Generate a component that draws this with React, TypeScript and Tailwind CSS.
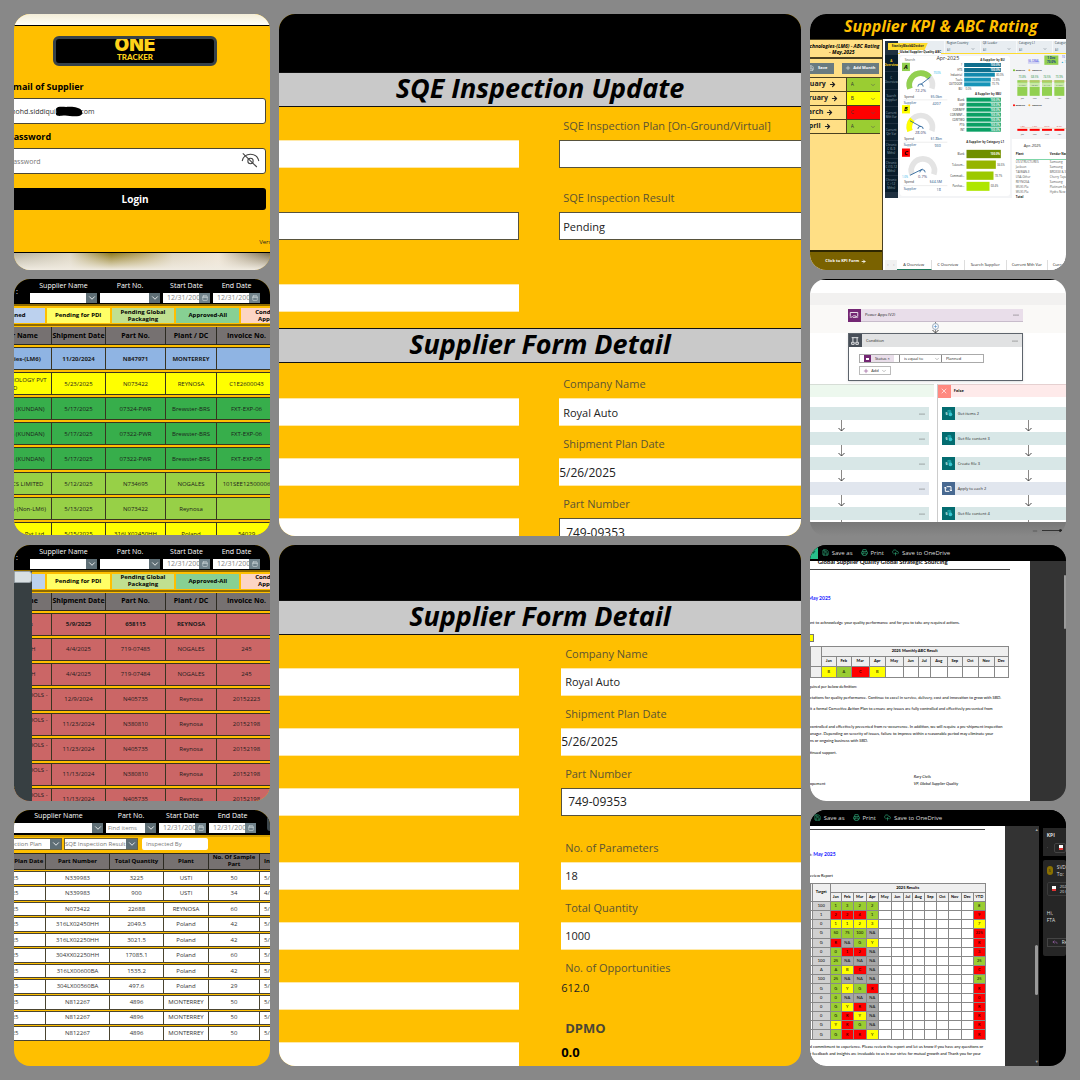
import { useId, type ReactNode } from "react";
import { ArrowRight, Calendar, ChevronDown, CloudUpload, Minus, Paperclip, Plus, Printer, Reply, Save, X } from "lucide-react";

const CARD =
  "relative aspect-square min-h-0 min-w-0 overflow-hidden rounded-2xl font-['Open_Sans','Noto_Sans',sans-serif]";

/* ---------------------------------------------------------------- Login */

function LoginCard() {
  return (
    <section className={`${CARD} flex flex-col bg-[#ffbf00]`}>
      <div className="h-3 shrink-0 border-b border-black bg-linear-to-b from-[#f3edd8] to-[#fffef8]" />
      <div className="flex flex-1 flex-col">
        <div className="mt-2.5 ml-[39px] flex h-[30px] w-[164px] flex-col items-center overflow-hidden rounded-md border-[3px] border-[#37424a] bg-black text-[#ffd21a]">
          <span className="-mt-px font-['Inter',sans-serif] text-[19px] leading-[14px] font-black">ONE</span>
          <span className="mt-px font-['Lato',sans-serif] text-[8px] leading-2 font-black">TRACKER</span>
        </div>
        <form className="mt-[15px] mr-1 -ml-2.5 flex flex-col" onSubmit={(e) => e.preventDefault()}>
          <label htmlFor="login-email" className="pl-1 text-[9px] leading-3 font-bold text-black">
            Email of Supplier
          </label>
          <div className="relative mt-[5px]">
            <input
              id="login-email"
              type="text"
              defaultValue="mohd.siddiqui@          com"
              className="block h-[26px] w-full rounded-[3px] border border-[#4a4636] bg-white pl-1 text-[7px] text-[#333]"
            />
            <svg viewBox="0 0 84 32" className="absolute top-2 left-[51px] h-[11px] w-7" aria-hidden="true">
              <path d="M3 8 C8 -1 24 3 40 2 C56 1 74 4 80 13 C86 24 78 30 66 30 C48 32 36 25 20 29 C6 31 0 26 4 20 Z" fill="#000" />
            </svg>
          </div>
          <label htmlFor="login-password" className="mt-[7px] pl-1 text-[9px] leading-3 font-bold text-black">
            Password
          </label>
          <div className="relative mt-[5px]">
            <input
              id="login-password"
              type="password"
              placeholder="Password"
              className="block h-[26px] w-full rounded-[3px] border border-[#4a4636] bg-white pl-1 text-[7px] placeholder:text-[#777]"
            />
            <svg viewBox="0 0 56 48" className="absolute top-1 right-1.5 h-4 w-[19px]" fill="none" stroke="#444" strokeWidth="3.2" aria-hidden="true">
              <path d="M3 27 C6 15 15 7 28 7 C41 7 50 15 53 27" />
              <circle cx="28" cy="27" r="8" />
              <path d="M5 4 L47 45" />
            </svg>
          </div>
          <button type="submit" className="mt-3.5 h-[22px] rounded-[3px] bg-black text-[10px] leading-none font-bold text-white">
            Login
          </button>
        </form>
        <p className="mt-auto -mr-2.5 mb-1.5 self-end text-[6px] leading-2 text-[#222]">Version</p>
      </div>
      <div className="h-[18px] shrink-0 border-t border-black bg-[linear-gradient(to_right,#b5b09e,#ddd6c4_22%,#8f7a1c_38%,#b5a262_50%,#ddd3bd_62%,#efe4d4_80%,#7d6f50)]">
        <div className="h-full bg-linear-to-b from-transparent to-[#f0ebe1]" />
      </div>
    </section>
  );
}

/* --------------------------------------------------------- Filter strip */

function FilterSelect({ label, placeholder, className }: { label: string; placeholder?: string; className: string }) {
  const id = useId();
  return (
    <div className={`flex shrink-0 flex-col items-center ${className}`}>
      <label htmlFor={id} className="text-[7px] leading-[10px] whitespace-nowrap text-white">
        {label}
      </label>
      <div className="relative mt-0.5 h-2.5 w-full">
        <select id={id} className="block h-full w-full appearance-none bg-white pl-0.5 text-[6px] leading-[10px] text-[#888]">
          <option>{placeholder ?? ""}</option>
        </select>
        <span className="pointer-events-none absolute inset-y-0 right-0 flex w-[11px] items-center justify-center bg-[#5f6f76] text-white">
          <ChevronDown className="size-2.5" />
        </span>
      </div>
    </div>
  );
}

function FilterDate({ label, value }: { label: string; value: string }) {
  const id = useId();
  return (
    <div className="flex w-[47px] shrink-0 flex-col items-center">
      <label htmlFor={id} className="text-[7px] leading-[10px] whitespace-nowrap text-white">
        {label}
      </label>
      <div className="mt-0.5 flex h-2.5 w-full">
        <input
          id={id}
          type="text"
          defaultValue={value}
          className="block min-w-0 flex-1 bg-white pl-1 text-[7px] leading-[10px] text-[#888]"
        />
        <span className="flex w-[11px] items-center justify-center bg-[#71838b] text-[#dfe6e9]">
          <Calendar className="size-1.5" />
        </span>
      </div>
    </div>
  );
}

/* ------------------------------------------------------- Shipment cards */

type Shipment = { tone: string; bold?: boolean; cells: ReactNode[] };

const TABS = [
  { label: "Planned", tone: "bg-[#bcd1ee]" },
  { label: "Pending for PDI", tone: "bg-[#ffff66]" },
  { label: "Pending Global Packaging", tone: "bg-[#c0e090]" },
  { label: "Approved-All", tone: "bg-[#87d093]" },
  { label: "Conditional Approved", tone: "bg-[#fcd5c4]" },
];

const BLUE = "bg-[#8fb4e3]";
const YELLOW = "bg-[#ffff00]";
const GREEN = "bg-[#37ae4b]";
const LIME = "bg-[#97d047]";
const RED = "bg-[#cb6666]";

const STATUS_ROWS: Shipment[] = [
  { tone: BLUE, bold: true, cells: ["Technologies-(LM6)", "11/20/2024", "N847971", "MONTERREY", ""] },
  { tone: YELLOW, cells: ["MERA TECHNOLOGY PVT LTD", "5/23/2025", "N073422", "REYNOSA", "C1E2600043"] },
  { tone: GREEN, cells: ["SK FORGING (KUNDAN)", "5/17/2025", "07324-PWR", "Brewster-BRS", "FXT-EXP-06"] },
  { tone: GREEN, cells: ["SK FORGING (KUNDAN)", "5/17/2025", "07322-PWR", "Brewster-BRS", "FXT-EXP-06"] },
  { tone: GREEN, cells: ["SK FORGING (KUNDAN)", "5/17/2025", "07322-PWR", "Brewster-BRS", "FXT-EXP-05"] },
  { tone: LIME, cells: ["ELECTRONICS LIMITED", "5/12/2025", "N734695", "NOGALES", "101SEE12500006"] },
  { tone: LIME, cells: ["Technologies-(Non-LM6)", "5/13/2025", "N073422", "Reynosa", ""] },
  { tone: YELLOW, cells: ["Precision Alloys Pvt Ltd", "5/15/2025", "316LX02450HH", "Poland", "54029"] },
];

const TOOLS = (
  <>
    STANLEY POWER TOOLS -
    <br />
    IND
  </>
);

const REJECTED_ROWS: Shipment[] = [
  { tone: RED, bold: true, cells: ["Luxor Plastics", "5/9/2025", "658115", "REYNOSA", ""] },
  { tone: RED, cells: ["PRECISION TECH", "4/4/2025", "719-07485", "NOGALES", "245"] },
  { tone: RED, cells: ["PRECISION TECH", "4/4/2025", "719-07484", "NOGALES", "245"] },
  { tone: RED, cells: [TOOLS, "12/9/2024", "N405735", "Reynosa", "20152223"] },
  { tone: RED, cells: [TOOLS, "11/23/2024", "N380810", "Reynosa", "20152198"] },
  { tone: RED, cells: [TOOLS, "11/23/2024", "N405735", "Reynosa", "20152198"] },
  { tone: RED, cells: [TOOLS, "11/13/2024", "N380810", "Reynosa", "20152198"] },
  { tone: RED, cells: [TOOLS, "11/13/2024", "N405735", "Reynosa", "20152198"] },
];

function ShipmentCard({ rows, drawer }: { rows: Shipment[]; drawer?: boolean }) {
  return (
    <section className={`${CARD} bg-[#ffbf00]`}>
      <div className="flex h-[25px] gap-[3px] bg-black pt-0.5">
        <span className="w-[13px] pt-1.5 pl-0.5 text-[7px] leading-[10px] text-white">:</span>
        <FilterSelect label="Supplier Name" className="w-[67px]" />
        <FilterSelect label="Part No." className="w-[60px]" />
        <FilterDate label="Start Date" value="12/31/2001" />
        <FilterDate label="End Date" value="12/31/2001" />
      </div>
      <div className="-ml-8 flex h-[22px] w-[322px] gap-0.5 border-y-2 border-[#8f6b00] pt-0.5 pb-px">
        {TABS.map((tab) => (
          <button
            key={tab.label}
            type="button"
            className={`w-[63px] px-1 text-center text-[6px] leading-[7px] font-bold text-black ${tab.tone}`}
          >
            {tab.label}
          </button>
        ))}
      </div>
      <table className="-mt-px -ml-[41px] w-[304px] table-fixed border-separate border-spacing-x-0 border-spacing-y-0.5">
        <colgroup>
          <col className="w-[79px]" />
          <col className="w-[54px]" />
          <col className="w-[60px]" />
          <col className="w-[51px]" />
          <col />
        </colgroup>
        <thead>
          <tr className="h-[18px] bg-[#767171] text-[7px] leading-2 font-bold text-black">
            {["Supplier Name", "Shipment Date", "Part No.", "Plant / DC", "Invoice No."].map((h) => (
              <th key={h} className="border-r border-b border-[#2c2a22] p-0 whitespace-nowrap">
                {h}
              </th>
            ))}
          </tr>
        </thead>
        <tbody>
          {rows.map((row, i) => (
            <tr key={i} className={`h-[23px] text-center text-[6px] leading-[8px] text-[#1c1c1c] ${row.tone} ${row.bold ? "font-bold" : ""}`}>
              {row.cells.map((cell, j) => (
                <td key={j} className="overflow-hidden border-y border-r border-[#3a3420] px-0.5 py-0">
                  {cell}
                </td>
              ))}
            </tr>
          ))}
        </tbody>
      </table>
      {drawer && (
        <div className="absolute top-[26px] bottom-0 left-0 w-[18px] bg-[#373f42]">
          <div className="h-3 rounded-r-[3px] border border-[#9aa3a8] bg-[#d8dfe2]" />
        </div>
      )}
    </section>
  );
}

/* ------------------------------------------------------ Inspection list */

const PARTS = [
  ["5/26/2025", "N339983", "3225", "USTI", "50", "5/26"],
  ["5/26/2025", "N339983", "900", "USTI", "34", "4/26"],
  ["5/26/2025", "N073422", "22688", "REYNOSA", "60", "5/26"],
  ["5/26/2025", "316LX02450HH", "2049.5", "Poland", "42", "5/26"],
  ["5/26/2025", "316LX02250HH", "3021.5", "Poland", "42", "5/26"],
  ["5/26/2025", "304XX02250HH", "17085.1", "Poland", "60", "5/26"],
  ["5/26/2025", "316LX00600BA", "1535.2", "Poland", "42", "5/26"],
  ["5/26/2025", "304LX00560BA", "497.6", "Poland", "29", "5/26"],
  ["5/26/2025", "N812267", "4896", "MONTERREY", "50", "5/26"],
  ["5/26/2025", "N812267", "4896", "MONTERREY", "50", "5/26"],
  ["5/26/2025", "N812267", "4896", "MONTERREY", "50", "5/26"],
];

function InspectionSelect({ label, className }: { label: string; className: string }) {
  return (
    <div className={`relative h-3 shrink-0 border border-[#6b6240] ${className}`}>
      <select aria-label={label} className="block h-full w-full appearance-none bg-white text-[6px] leading-[10px] text-[#777]">
        <option>{label}</option>
      </select>
      <span className="pointer-events-none absolute inset-y-0 right-0 flex w-[11px] items-center justify-center bg-[#5f6f76] text-white">
        <ChevronDown className="size-2.5" />
      </span>
    </div>
  );
}

function InspectionCard() {
  return (
    <section className={`${CARD} bg-[#ffbf00]`}>
      <div className="flex h-[25px] gap-[3px] bg-black pt-px">
        <FilterSelect label="Supplier Name" className="w-[89px]" />
        <FilterSelect label="Part No." placeholder="Find items" className="w-[50px]" />
        <FilterDate label="Start Date" value="12/31/2001" />
        <FilterDate label="End Date" value="12/31/2001" />
        <button type="button" aria-label="Clear filters" className="mt-1 ml-2 h-4 w-3 shrink-0 rounded-[3px] bg-[#3d474c]" />
      </div>
      <div className="flex h-[17px] items-center gap-0.5 border-t-2 border-[#d49f00]">
        <InspectionSelect label="Inspection Plan" className="-ml-4 w-16" />
        <InspectionSelect label="SQE Inspection Result" className="w-[74px]" />
        <input
          aria-label="Inspected By"
          placeholder="Inspected By"
          className="ml-0.5 h-3 w-[66px] rounded-[2px] bg-white pl-1 text-[6px] placeholder:text-[#777]"
        />
      </div>
      <table className="-ml-8 h-[190px] w-[311px] table-fixed border-separate border-spacing-x-0 border-spacing-y-px">
        <colgroup>
          <col className="w-16" />
          <col className="w-16" />
          <col className="w-[54px]" />
          <col className="w-[45px]" />
          <col className="w-[51px]" />
          <col />
        </colgroup>
        <thead>
          <tr className="h-[17px] bg-[#767171] text-[6px] leading-[7px] font-bold text-black">
            {["Shipment Plan Date", "Part Number", "Total Quantity", "Plant", "No. Of Sample Part", "Inspection"].map((h, i) => (
              <th key={h} className={`border-y border-r border-[#2c2a22] p-0 ${i === 5 ? "pl-1 text-left" : ""}`}>
                {h}
              </th>
            ))}
          </tr>
        </thead>
        <tbody>
          {PARTS.map((row, i) => (
            <tr key={i} className="bg-white text-center text-[6px] leading-[7px] text-[#333]">
              {row.map((cell, j) => (
                <td
                  key={j}
                  className={`border-y border-r border-[#4a4430] py-0 ${j === 0 ? "pl-2 text-left" : j === 5 ? "pl-1 text-left" : ""}`}
                >
                  {cell}
                </td>
              ))}
            </tr>
          ))}
        </tbody>
      </table>
    </section>
  );
}

/* ---------------------------------------------------------- Form panels */

function Band({ children }: { children: ReactNode }) {
  return (
    <h2 className="h-[35px] shrink-0 border-y border-[#111] bg-[#c9c9c9] text-center text-[27px] leading-[30px] font-bold text-black italic">
      {children}
    </h2>
  );
}

function Field({ label, value, boxed, inner }: { label: string; value?: string; boxed?: boolean; inner?: string }) {
  const id = useId();
  return (
    <div className="flex flex-col">
      <label htmlFor={id} className="pl-1 text-[11px] leading-4 whitespace-nowrap text-[#5c5433]">
        {label}
      </label>
      <input
        id={id}
        type="text"
        defaultValue={value}
        className={`mt-1.5 -mr-1 block h-7 bg-white text-[#222] ${inner ?? "pl-1 text-[11px]"} ${
          boxed ? "border border-[#57523c]" : "border-y border-[#ffe9a8]"
        }`}
      />
    </div>
  );
}

function BlankField({ label, boxed }: { label: string; boxed?: boolean }) {
  return (
    <input
      type="text"
      aria-label={label}
      className={`-ml-1 block h-7 bg-white ${boxed ? "border border-[#57523c]" : "border-y border-[#ffe9a8]"}`}
    />
  );
}

function InspectionUpdateCard() {
  return (
    <section className={`${CARD} flex flex-col bg-[#ffbf00]`}>
      <div className="h-[58px] shrink-0 bg-black" />
      <Band>SQE Inspection Update</Band>
      <div className="flex gap-10 pb-4">
        <div className="flex w-[46%] flex-col gap-11 pt-[33px]">
          <BlankField label="Inspection date" />
          <BlankField label="Inspected by" boxed />
          <BlankField label="Remarks" />
        </div>
        <div className="flex flex-1 flex-col gap-[22px] pt-[11px]">
          <Field label="SQE Inspection Plan [On-Ground/Virtual]" boxed />
          <Field label="SQE Inspection Result" value="Pending" boxed inner="pl-[3px] text-[11px]" />
        </div>
      </div>
      <Band>Supplier Form Detail</Band>
      <div className="flex gap-10">
        <div className="flex w-[46%] flex-col gap-8 pt-[35px]">
          <BlankField label="Supplier code" />
          <BlankField label="Invoice number" />
          <BlankField label="Plant" />
        </div>
        <div className="flex flex-1 flex-col gap-2.5 pt-[13px]">
          <Field label="Company Name" value="Royal Auto" />
          <Field label="Shipment Plan Date" value="5/26/2025" inner="pl-0 text-[12px]" />
          <Field label="Part Number" value="749-09353" boxed inner="pl-1.5 text-[12px]" />
        </div>
      </div>
    </section>
  );
}

function SupplierFormCard() {
  return (
    <section className={`${CARD} flex flex-col bg-[#ffbf00]`}>
      <div className="h-[55px] shrink-0 bg-black" />
      <Band>Supplier Form Detail</Band>
      <div className="flex gap-10">
        <div className="flex w-[46%] flex-col gap-8 pt-[33px]">
          <BlankField label="Supplier code" />
          <BlankField label="Invoice number" />
          <BlankField label="Plant" />
          <div className="mt-3.5 flex flex-col gap-8">
            <BlankField label="Defects" />
            <BlankField label="Sample size" />
            <BlankField label="Rejections" />
            <BlankField label="Sigma level" />
          </div>
        </div>
        <div className="flex flex-1 flex-col gap-2.5 pt-[11px] pl-0.5">
          <Field label="Company Name" value="Royal Auto" />
          <Field label="Shipment Plan Date" value="5/26/2025" inner="pl-0 text-[12px]" />
          <Field label="Part Number" value="749-09353" boxed inner="pl-1.5 text-[12px]" />
          <div className="mt-3.5 flex flex-col gap-2.5">
            <Field label="No. of Parameters" value="18" />
            <Field label="Total Quantity" value="1000" />
          </div>
          <dl className="text-[11px] leading-4">
            <dt className="pl-1 text-[#5c5433]">No. of Opportunities</dt>
            <dd className="mt-1 text-[#222]">612.0</dd>
            <dt className="mt-6 pl-1 text-[13px] font-bold text-[#4a4636]">DPMO</dt>
            <dd className="mt-2 text-[13px] font-bold text-black">0.0</dd>
          </dl>
        </div>
      </div>
    </section>
  );
}

/* ------------------------------------------------------------ KPI card */

const MONTHS = [
  { name: "January", grade: "A", tone: "bg-[#9acd32]" },
  { name: "February", grade: "B", tone: "bg-[#ffff00]" },
  { name: "March", grade: "C", tone: "bg-[#ff0000]" },
  { name: "April", grade: "A", tone: "bg-[#9acd32]" },
];

const NAV = [
  "A Overview",
  "C Overview",
  "Search Supplier",
  "Current Mth Var",
  "Current Qtr Var",
  "Chronic C (6-9 Mths)",
  "Chronic C (10-12 Mths)",
  "Chronic C >12 Mths)",
];

const GAUGES = [
  { grade: "A", top: 157, badge: "#92d050", arc: "#92d050", share: 72, pct: "72.2%", spend: "$5.0bn", count: "4207", needle: "M344 223 L374 200", target: "70.0%", tx: 394, ty: 191 },
  { grade: "B", top: 285, badge: "#ffff00", arc: "#ffff00", share: 28, pct: "28.0%", spend: "$1.8bn", count: "930", needle: "M345 350 L312 332", target: "", tx: 0, ty: 0 },
  { grade: "C", top: 416, badge: "#ff0000", arc: "#e4e4e4", share: 1, pct: "0.7%", spend: "$44.5M", count: "18", needle: "M350 478 L312 497", target: "1.0%", tx: 297, ty: 506 },
];

function GaugeColumn() {
  return (
    <svg viewBox="282 138 148 420" className="h-[140px] w-[49px] shrink-0" role="img" aria-label="Rating gauges">
      <text x="312" y="151" fontSize="10" textAnchor="middle" fill="#555">Search</text>
      {GAUGES.map((g) => {
        const cx = 345 + (g.grade === "C" ? 6 : 0);
        const cy = g.top + 66;
        return (
          <g key={g.grade}>
            <path d={`M${cx - 33} ${cy + 12} A35 35 0 1 1 ${cx + 33} ${cy + 12}`} fill="none" stroke="#e4e4e4" strokeWidth="17" />
            <path
              d={`M${cx - 33} ${cy + 12} A35 35 0 1 1 ${cx + 33} ${cy + 12}`}
              fill="none"
              stroke={g.arc}
              strokeWidth="17"
              pathLength={100}
              strokeDasharray={`${g.share} 200`}
            />
            <path d={g.needle} stroke="#1c5a94" strokeWidth="2.5" />
            <path d={`M${cx - 9} ${cy + 6} a8 8 0 1 1 16 0`} fill="none" stroke="#1c5a94" strokeWidth="2.5" />
            <rect x="288" y={g.top} width="24" height="25" fill={g.badge} />
            <text x="300" y={g.top + 19} fontSize="18" fontWeight="700" fontStyle="italic" textAnchor="middle">{g.grade}</text>
            <text x={cx - 1} y={g.top + 88} fontSize="12" textAnchor="middle" fill="#3b3b6b">{g.pct}</text>
            {g.target && <text x={g.tx} y={g.ty} fontSize="8" textAnchor="middle" fill="#18b0e8">{g.target}</text>}
            <text x="295" y={g.top + 105} fontSize="10" fill="#333">Spend</text>
            <text x="409" y={g.top + 105} fontSize="11" textAnchor="end" fill="#1c4f86">{g.spend}</text>
            <path d={`M293 ${g.top + 112} H425`} stroke="#ddd" strokeWidth="1.5" />
            <text x="293" y={g.top + 124} fontSize="10" fill="#1c4f86">Supplier</text>
            <text x="405" y={g.top + 127} fontSize="11" textAnchor="end" fill="#1c4f86">{g.count}</text>
          </g>
        );
      })}
    </svg>
  );
}

type Bar = { y: number; h: number; end: number; name: string; value: string; fill: string };

const BU: Bar[] = [
  { y: 165, h: 12, end: 585, name: "?", value: "100.0%", fill: "#0f6f8e" },
  { y: 180, h: 12, end: 585, name: "HTS", value: "100.0%", fill: "#0f6f8e" },
  { y: 194, h: 12, end: 567, name: "Industrial", value: "80.0%", fill: "#1289ad" },
  { y: 209, h: 12, end: 555, name: "Tools", value: "72.8%", fill: "#1594b8" },
  { y: 223, h: 12, end: 554, name: "OUTDOOR", value: "70.7%", fill: "#1594b8" },
  { y: 238, h: 12, end: 475, name: "BU", value: "0.0%", fill: "#1594b8" },
];

const SBU: Bar[] = ["Blank", "GBP", "COR/MFP", "COR/MNP...", "COR/TWO", "PTG", "INT"].map((name, i) => ({
  y: 269 + i * 15,
  h: 12,
  end: 585,
  name,
  value: "100.0%",
  fill: "#0aa064",
}));

const CATEGORY: Bar[] = [
  { y: 432, h: 25, end: 585, name: "Blank", value: "100.0%", fill: "#6f8f00" },
  { y: 464, h: 25, end: 570, name: "Telecom...", value: "84.6%", fill: "#96b400" },
  { y: 497, h: 25, end: 563, name: "Commodi...", value: "78.7%", fill: "#9cc900" },
  { y: 529, h: 27, end: 551, name: "Purchas...", value: "68.4%", fill: "#aee600" },
];

function Bars({ bars, start }: { bars: Bar[]; start: number }) {
  return (
    <g>
      {bars.map((b) => {
        const full = b.end === 585;
        return (
          <g key={b.name} fontSize="8">
            <rect x={start} y={b.y - b.h / 2} width={b.end - start} height={b.h} fill={b.fill} />
            <text x={start - 6} y={b.y + 3} textAnchor="end" fill="#222">{b.name}</text>
            <text x={full ? 582 : b.end + 4} y={b.y + 3} textAnchor={full ? "end" : "start"} fill={full ? "#fff" : "#444"} fontWeight={full ? 700 : 400}>
              {b.value}
            </text>
          </g>
        );
      })}
    </g>
  );
}

function SupplierBars() {
  return (
    <svg viewBox="430 138 182 420" className="h-[140px] w-[61px] shrink-0 overflow-visible" role="img" aria-label="A suppliers by unit">
      <text x="426" y="151" fontSize="16" textAnchor="middle" fill="#333">Apr-2025</text>
      <g fontSize="9" fontWeight="700" textAnchor="middle" fill="#333">
        <text x="560" y="152">A Supplier by BU</text>
        <text x="547" y="254">A Supplier by SBU</text>
        <text x="538" y="400">A Supplier by Category L1</text>
      </g>
      <Bars bars={BU} start={475} />
      <Bars bars={SBU} start={482} />
      <Bars bars={CATEGORY} start={482} />
    </svg>
  );
}

function TrendCharts() {
  return (
    <svg viewBox="615 133 165 248" className="h-[83px] w-[55px] shrink-0" role="img" aria-label="Monthly trend">
      <text x="680" y="156" fontSize="9" textAnchor="middle" fill="#2a35e0" textDecoration="underline">GLOBAL</text>
      <rect x="712" y="137" width="42" height="28" fill="#92d050" />
      <text x="733" y="148" fontSize="9" fontWeight="700" textAnchor="middle" fill="#173a8a">1 Dec</text>
      <text x="733" y="160" fontSize="9" fontWeight="700" textAnchor="middle" fill="#173a8a">70.0%</text>
      <text x="764" y="146" fontSize="8" fill="#2a35e0">10</text>
      <text x="762" y="159" fontSize="8" fill="#12a5c9">▲ 1</text>
      <circle cx="621" cy="181" r="3" fill="#6ec02c" />
      <text x="626" y="184" fontSize="5" fontWeight="700">GREEN 64%</text>
      <circle cx="667" cy="181" r="3" fill="#f5b041" />
      <text x="676" y="184" fontSize="5" fontWeight="700">GREEN 64%</text>
      {["Jan", "Feb", "Mar", "Apr", ""].map((m, i) => {
        const x = 631 + i * 37;
        return (
          <g key={i} fontSize="8" textAnchor="middle">
            <text x={x + 15} y="205" fill="#238a3a">{["73.8%", "68.5%", "74.5%", "73.9%", ""][i]}</text>
            <rect x={x} y="211" width="30" height="8" fill="#92d050" />
            <rect x={x} y="219" width="30" height="11" fill="#c9e9a6" />
            <rect x={x} y="231" width="30" height="27" fill="#92d050" />
            <text x={x + 15} y="228" fontSize="7" fill="#567">{["74.0%", "73.0%", "74.1%", "74.8%", ""][i]}</text>
            <text x={x + 15} y="269" fontSize="7" fill="#444">{m}</text>
            <text x={x + 15} y="351" fontSize="7" fill="#e03030">{["1.0%", "1.6%", "0.7%", "0.7%", ""][i]}</text>
            <rect x={x} y="357" width="30" height="6" fill="#ff0000" />
            <text x={x + 15} y="375" fontSize="7" fill="#444">{m}</text>
          </g>
        );
      })}
      <path d="M640 214 L780 214 M640 353 L780 356" stroke="#f8b98a" strokeWidth="1.5" fill="none" />
      <circle cx="621" cy="286" r="3" fill="#ff0000" />
      <text x="626" y="289" fontSize="5" fontWeight="700">GREEN 67%</text>
      <circle cx="667" cy="286" r="3" fill="#f5b041" />
      <text x="676" y="289" fontSize="5" fontWeight="700">GREEN 67%</text>
    </svg>
  );
}

const VENDORS = [
  ["US STRUCTURES", "Samsung"],
  ["Jackson", "Samsung"],
  ["TAIWAN-E", "BROSSE & SON"],
  ["USA-Other", "Cherry Tape Ind"],
  ["REYNOSA", "Samsung"],
  ["WUXI-Pla", "Platinum Equity"],
  ["WUXI-Pla", "Hydro New"],
];

function KpiCard() {
  return (
    <section className={`${CARD} flex flex-col bg-white`}>
      <h2 className="h-[25px] shrink-0 bg-black pl-1.5 text-center text-[16px] leading-6 font-bold text-[#ffbf00] italic">
        Supplier KPI &amp; ABC Rating
      </h2>
      <div className="flex min-h-0 flex-1">
        <div className="flex w-[73px] shrink-0 flex-col border-r border-[#4a4020] bg-[#ffdf85]">
          <h3 className="flex h-5 items-center justify-center border-t border-b-2 border-[#4a4020] pr-2 text-center text-[5px] leading-[6px] font-bold text-black italic">
            <span className="-mx-4 whitespace-nowrap">
              Technologies-(LM6) - ABC Rating
              <br />- May,2025
            </span>
          </h3>
          <div className="flex h-[19px] items-center gap-2 border-b border-[#4a4020] pr-[3px]">
            <button type="button" className="-ml-2 flex h-[11px] w-8 items-center justify-center gap-1 bg-[#6a7b80] text-[4px] font-bold text-white">
              <Save className="size-1.5" /> Save
            </button>
            <button type="button" className="flex h-[11px] flex-1 items-center justify-center gap-0.5 bg-[#6a7b80] text-[4px] font-bold whitespace-nowrap text-white">
              <Plus className="size-1.5" /> Add Month
            </button>
          </div>
          <div className="mr-0.5">
            {MONTHS.map((m) => (
              <div key={m.name} className="flex h-3.5 border-b border-[#4a4020]">
                <div className="-ml-[21px] flex w-[58px] shrink-0 items-center justify-center gap-[3px] border-r border-[#4a4020] text-[7px] font-bold text-[#222]">
                  <span>{m.name}</span>
                  <ArrowRight className="size-[7px]" strokeWidth={4} />
                </div>
                <div className={`relative flex-1 ${m.tone}`}>
                  <select aria-label={`${m.name} rating`} className="block h-full w-full appearance-none pl-1 text-[5px] text-[#333]">
                    <option>{m.grade}</option>
                  </select>
                  <ChevronDown className="pointer-events-none absolute top-1 right-1 size-1.5 text-[#555]" />
                </div>
              </div>
            ))}
          </div>
          <button type="button" className="mt-auto flex h-5 items-center justify-center gap-0.5 border-t-2 border-[#2f2700] bg-[#7a6200] text-[4px] font-bold text-white">
            Click to KPI Form <ArrowRight className="size-[5px]" strokeWidth={4} />
          </button>
        </div>
        <div className="flex min-w-0 flex-1 flex-col pl-0.5">
          <div className="mt-0.5 flex h-[157px] overflow-hidden bg-[#f3f4f6]">
            <nav className="flex w-[13px] shrink-0 flex-col gap-px bg-[#1f3040] pt-3.5 pb-1.5">
              {NAV.map((item, i) => (
                <a
                  key={item}
                  href="#kpi"
                  className={`flex flex-1 items-center justify-center bg-[#081c2b] text-center text-[3px] leading-[4px] ${i === 0 ? "font-bold text-[#ffd21a]" : "text-[#8fa3b0]"}`}
                >
                  {item}
                </a>
              ))}
            </nav>
            <div className="flex min-w-0 flex-1 flex-col">
              <div className="flex h-3 shrink-0 bg-[#e8edf1] pl-[45px]">
                {["Region Country", "QE Leader", "Category L1", "Category L2"].map((f) => (
                  <label key={f} className="ml-px flex w-[35px] shrink-0 flex-col border-l border-[#f6f8fa] pl-0.5 text-[3px] leading-[4px] text-[#234]">
                    {f}
                    <span className="relative mt-0.5">
                      <select className="block h-1.5 w-full appearance-none text-[3px] text-[#567]">
                        <option>All</option>
                      </select>
                      <ChevronDown className="pointer-events-none absolute top-0 right-1 size-1" />
                    </span>
                  </label>
                ))}
              </div>
              <div className="h-px shrink-0 bg-[#ffdc2e]" />
              <div className="flex min-h-0 flex-1">
                <div className="mt-0.5 mb-0.5 ml-0.5 flex w-[110px] shrink-0 rounded-[3px] bg-white">
                  <GaugeColumn />
                  <SupplierBars />
                </div>
                <div className="ml-0.5 flex min-w-0 flex-1 flex-col">
                  <TrendCharts />
                  <div className="mt-0.5 flex-1 overflow-hidden bg-white px-1 pt-1">
                    <p className="pl-2 text-[4px] leading-[5px] text-[#222]">Apr-2025</p>
                    <table className="mt-1 w-20 table-fixed text-left text-[3px] leading-[5px] text-[#555]">
                      <thead>
                        <tr className="border-b border-[#7fd6a8] font-bold text-[#222]">
                          <th className="w-[34px] p-0 pb-0.5">Plant</th>
                          <th className="p-0 pb-0.5">Vendor Name</th>
                        </tr>
                      </thead>
                      <tbody>
                        {VENDORS.map((v, i) => (
                          <tr key={i}>
                            <td className="p-0 whitespace-nowrap">{v[0]}</td>
                            <td className="p-0 whitespace-nowrap">{v[1]}</td>
                          </tr>
                        ))}
                        <tr className="font-bold text-[#222]">
                          <td className="p-0">Total</td>
                        </tr>
                      </tbody>
                    </table>
                  </div>
                </div>
              </div>
            </div>
          </div>
          <div className="mt-auto flex h-2.5 items-stretch bg-[#f1f1f1] text-[4px] leading-[8px] whitespace-nowrap text-[#222]">
            <span className="flex w-3 shrink-0 items-center justify-around text-[#888]">
              <span>‹</span>
              <span>›</span>
            </span>
            {[
              ["A Overview", "w-[35px] border-b border-b-[#1d7a5c]"],
              ["C Overview", "w-[33px]"],
              ["Search Supplier", "w-[42px]"],
              ["Current Mth Var", "w-[41px]"],
              ["Current Qtr Var", "w-10"],
            ].map(([t, c]) => (
              <button key={t} type="button" className={`shrink-0 border-r border-r-[#ddd] bg-white ${c}`}>
                {t}
              </button>
            ))}
          </div>
        </div>
      </div>
      <span className="absolute top-[29px] left-[78px] h-[7px] w-10 bg-[#ffdc2e] pl-1 text-[3px] leading-[7px] font-bold text-[#222] [clip-path:polygon(0_0,100%_0,92%_100%,0_100%)]">
        StanleyBlack&amp;Decker
      </span>
      <span className="absolute top-9 left-[90px] bg-white text-[3px] leading-[5px] font-bold whitespace-nowrap text-[#222]">
        Global Supplier Quality ABC
      </span>
    </section>
  );
}

/* ----------------------------------------------------------- Flow card */

function StepArrow() {
  return (
    <svg viewBox="0 0 20 36" className="h-3 w-[7px]" aria-hidden="true">
      <path d="M10 0 V33" stroke="#8a8886" strokeWidth="3" />
      <path d="M1 24 L10 33 L19 24" stroke="#444" strokeWidth="3" fill="none" />
    </svg>
  );
}

function Dots() {
  return (
    <svg viewBox="0 0 18 6" className="mr-1 h-0.5 w-1.5 shrink-0" fill="#444" aria-hidden="true">
      <circle cx="3" cy="3" r="1.6" />
      <circle cx="9" cy="3" r="1.6" />
      <circle cx="15" cy="3" r="1.6" />
    </svg>
  );
}

function ShareIcon() {
  return (
    <span className="flex size-[13px] shrink-0 items-center justify-center bg-[#036c70]">
      <svg viewBox="0 0 24 24" className="size-[9px]" aria-hidden="true">
        <circle cx="14" cy="8" r="6" fill="#1a9ba1" />
        <circle cx="17" cy="14" r="5" fill="#37c6d0" />
        <rect x="2" y="7" width="10" height="10" fill="#03787c" />
        <path d="M9 9.5 H6 a1.3 1.3 0 0 0 0 2.6 H8 a1.3 1.3 0 0 1 0 2.6 H5" stroke="#fff" strokeWidth="1.5" fill="none" />
      </svg>
    </span>
  );
}

const STEPS = ["Get items 2", "Get file content 3", "Create file 3", "Apply to each 2", "Get file content 4"];

function FlowCard() {
  return (
    <section className={`${CARD} flex flex-col bg-[#848484]`}>
      <div className="flex h-[243px] shrink-0 flex-col bg-white text-[4px] text-[#222]">
        <div className="h-3.5 shrink-0 border-t border-black" />
        <div className="h-3 shrink-0 bg-[#f2f1f0]" />
        <div className="flex h-7 shrink-0 flex-col items-center bg-[#faf9f7] pt-1 pr-[5px]">
          <div className="flex h-[13px] w-[175px] items-center border-b border-[#c8bccb] bg-[#e9deea]">
            <span className="flex size-[13px] items-center justify-center bg-[#742774]">
              <svg viewBox="0 0 24 24" className="size-2.5" fill="none" stroke="#fff" strokeWidth="2" aria-hidden="true">
                <path d="M3 15 V6 H21 V15 M2 17 H8 M16 17 H22" />
                <path d="M12 13 l3 3 -3 3 -3 -3 z M15 13 l3 3 -3 3" />
              </svg>
            </span>
            <span className="ml-1 flex-1">Power Apps (V2)</span>
            <Dots />
          </div>
          <div className="relative flex h-3 flex-col items-center">
            <StepArrow />
            <Plus className="absolute top-px size-[7px] rounded-full border border-[#9ab] bg-white text-[#1467b3]" />
          </div>
        </div>
        <div className="flex shrink-0 justify-center pr-[5px]">
          <div className="h-12 w-[175px] border border-[#5d646c] shadow-sm">
            <div className="flex h-[13px] items-center bg-[#e1e2e3]">
              <span className="flex size-[13px] items-center justify-center bg-[#484f58]">
                <svg viewBox="0 0 24 24" className="size-2.5" fill="none" stroke="#fff" strokeWidth="2" aria-hidden="true">
                  <path d="M4 4 H20 M7 4 V14 M17 4 V14 M4 15 H10 V20 H4 Z M14 15 H20 V20 H14 Z" />
                </svg>
              </span>
              <span className="ml-1 flex-1">Condition</span>
              <Dots />
            </div>
            <div className="mt-[7px] ml-2.5 flex h-[9px] w-[125px] border border-[#aaa]">
              <span className="flex w-10 shrink-0 items-center border-r border-[#888] pl-1">
                <span className="flex items-center gap-1 bg-[#e9deea] pr-1">
                  <span className="flex size-[7px] items-center justify-center bg-[#742774]">
                    <span className="h-0.5 w-[3px] border border-white" />
                  </span>
                  Status ×
                </span>
              </span>
              <select aria-label="Operator" className="w-[42px] appearance-none border-r border-[#888] pl-1 text-[4px]">
                <option>is equal to</option>
              </select>
              <ChevronDown className="-ml-2 size-1.5 shrink-0 self-center text-[#888]" />
              <input aria-label="Value" defaultValue="Planned" className="ml-0.5 min-w-0 flex-1 pl-1 text-[4px]" />
            </div>
            <button type="button" className="mt-[3px] ml-2.5 flex h-[9px] w-8 items-center justify-center gap-0.5 border border-[#bbb] text-[4px] leading-none">
              <Plus className="size-1.5 text-[#742774]" /> Add <ChevronDown className="size-1.5 text-[#888]" />
            </button>
          </div>
        </div>
        <div className="mt-[3px] flex min-h-0 flex-1 gap-[3px]">
          <div className="flex w-[124px] shrink-0 flex-col">
            <div className="mb-2.5 h-[13px] shrink-0 border-t border-[#d6ddd6] bg-[#edf8ee]" />
            {STEPS.map((s, i) => (
              <div key={s} className="flex shrink-0 flex-col">
                <div className={`mr-[5px] flex h-[13px] items-center justify-end ${i === 3 ? "bg-[#e1e6ee]" : "bg-[#d8e7e7]"}`}>
                  <Dots />
                </div>
                <div className="ml-7 h-3">
                  <StepArrow />
                </div>
              </div>
            ))}
          </div>
          <div className="flex min-w-0 flex-1 flex-col border-l border-[#ccc]">
            <div className="mb-2.5 flex h-[13px] shrink-0 items-center border-t border-[#e5d0d0] bg-[#feeaea]">
              <span className="flex size-[13px] items-center justify-center bg-[#ff8a80] text-white">
                <X className="size-2" />
              </span>
              <span className="ml-[3px] font-bold">False</span>
            </div>
            {STEPS.map((s, i) => (
              <div key={s} className="ml-1 flex shrink-0 flex-col">
                <div className={`flex h-[13px] items-center gap-[3px] ${i === 3 ? "bg-[#e1e6ee]" : "bg-[#d8e7e7]"}`}>
                  {i === 3 ? (
                    <span className="flex size-[13px] items-center justify-center bg-[#486991]">
                      <svg viewBox="0 0 24 24" className="size-2" fill="none" stroke="#fff" strokeWidth="3" aria-hidden="true">
                        <path d="M8 5 H21 V17 M16 19 H4 V7 M1 10 L4 6 L7 10 M18 14 L21 18 L24 14" />
                      </svg>
                    </span>
                  ) : (
                    <ShareIcon />
                  )}
                  <span>{s}</span>
                </div>
                <div className="ml-[83px] h-3">
                  <StepArrow />
                </div>
              </div>
            ))}
          </div>
        </div>
      </div>
      <div className="flex flex-1 items-center justify-end gap-1 bg-linear-to-b from-[#777] to-[#888] pt-1 pr-1 text-[#333]">
        <Minus className="size-1.5" />
        <input
          type="range"
          aria-label="Zoom"
          defaultValue={100}
          className="h-px w-5 appearance-none bg-[#333] [&::-webkit-slider-thumb]:size-[3px] [&::-webkit-slider-thumb]:appearance-none [&::-webkit-slider-thumb]:rounded-full [&::-webkit-slider-thumb]:bg-[#222]"
        />
      </div>
    </section>
  );
}

/* --------------------------------------------------------- Letter cards */

function ActionBar({ compact }: { compact?: boolean }) {
  return (
    <div className={`flex h-4 shrink-0 items-center gap-2 bg-black text-[6px] leading-none whitespace-nowrap text-[#ddd] ${compact ? "pl-1" : ""}`}>
      {!compact && <span className="flex h-3 w-2 items-center justify-center bg-[#27c08a] text-[5px] text-black">✓</span>}
      <button type="button" className={`flex items-center gap-[3px] ${compact ? "" : "-ml-1"}`}>
        <Save className="size-[7px] text-[#35c08a]" /> Save as
      </button>
      <button type="button" className="flex items-center gap-[3px]">
        <Printer className="size-[7px] text-[#35c08a]" /> Print
      </button>
      <button type="button" className="flex items-center gap-[3px]">
        <CloudUpload className="size-[7px] text-[#35c08a]" /> Save to OneDrive
      </button>
    </div>
  );
}

const LETTER = "font-['Lato','Open_Sans',sans-serif] text-[4px] leading-[7px] whitespace-nowrap text-black";
const CELL = "border border-[#888] p-0";
const YEAR = ["Jan", "Feb", "Mar", "Apr", "May", "Jun", "Jul", "Aug", "Sep", "Oct", "Nov", "Dec"];

const G = "bg-[#9acd32]";
const Y = "bg-[#ffff00]";
const R = "bg-[#ff0000]";
const N = "bg-[#a6a6a6]";

function LetterCard() {
  return (
    <section className={`${CARD} flex flex-col bg-[#333]`}>
      <ActionBar />
      <div className="flex min-h-0 flex-1">
        <article className={`w-[220px] overflow-hidden bg-white ${LETTER}`}>
          <h3 className="-mt-1 ml-2 text-[6px] leading-[9px] font-bold">Global Supplier Quality Global Strategic Sourcing</h3>
          <hr className="mt-[3px] mr-5 border-[#444]" />
          <p className="mt-[25px] -ml-1 text-[5px] font-bold text-[#1a1aff]">: May 2025</p>
          <p className="mt-[17px] -ml-1">want to acknowledge your quality performance and for you to take any required actions.</p>
          <div className="mt-2 h-2 w-1 border border-l-0 border-[#777] bg-[#ffff00]" />
          <table className="mt-1 w-[199px] table-fixed border-collapse text-center leading-none">
            <colgroup>
              <col className="w-[11px]" />
              <col className="w-[15px]" />
              <col className="w-[15px]" />
              <col className="w-[18px]" />
              <col className="w-4" />
              <col className="w-[18px]" />
              <col className="w-[15px]" />
              <col className="w-3" />
              <col className="w-[17px]" />
              <col className="w-[15px]" />
              <col className="w-4" />
              <col className="w-4" />
              <col />
            </colgroup>
            <thead>
              <tr className="h-2.5 bg-[#efefef]">
                <th rowSpan={2} className={CELL} />
                <th colSpan={12} className={CELL}>2025 Monthly ABC Result</th>
              </tr>
              <tr className="h-2.5 bg-[#efefef]">
                {YEAR.map((m) => (
                  <th key={m} className={CELL}>{m}</th>
                ))}
              </tr>
            </thead>
            <tbody>
              <tr className="h-[11px]">
                <td className={`${CELL} bg-[#efefef]`} />
                {YEAR.map((m, i) => (
                  <td key={m} className={`${CELL} ${[Y, G, R, Y][i] ?? ""}`}>
                    {["B", "A", "C", "B"][i] ?? ""}
                  </td>
                ))}
              </tr>
            </tbody>
          </table>
          <p className="mt-[5px] -ml-px">quired per below definition:</p>
          <p className="mt-1">ctations for quality performance. Continue to excel in service, delivery, cost and innovation to grow with SBD.</p>
          <p className="mt-1">it a formal Corrective Action Plan to ensure any issues are fully controlled and effectively prevented from</p>
          <p className="mt-[11px]">
            controlled and effectively prevented from re-occurrence. In addition, we will require a pre-shipment inspection
            <br />
            anager. Depending on severity of issues, failure to improve within a reasonable period may eliminate your
            <br />
            ns or ongoing business with SBD.
          </p>
          <p className="mt-[5px]">tinued support.</p>
          <div className="mt-[17px] flex">
            <p className="w-[104px]">
              <br />
              opement
            </p>
            <p className="italic">
              Rary Civils
              <br />
              VP, Global Supplier Quality
            </p>
          </div>
        </article>
        <div className="ml-auto flex w-0.5 flex-col pt-3.5">
          <span className="h-[54px] rounded-full bg-[#9a9a9a]" />
        </div>
      </div>
    </section>
  );
}

const RESULTS: { target: string; cells: [string, string][]; ytd: [string, string] }[] = [
  { target: "100", cells: [["1", G], ["3", G], ["2", G], ["2", G]], ytd: ["8", G] },
  { target: "1", cells: [["2", R], ["2", R], ["4", R], ["1", G]], ytd: ["9", R] },
  { target: "0", cells: [["1", Y], ["1", Y], ["2", Y], ["3", Y]], ytd: ["7", Y] },
  { target: "G", cells: [["50", G], ["75", G], ["100", G], ["NA", N]], ytd: ["225", R] },
  { target: "G", cells: [["R", R], ["NA", N], ["G", G], ["Y", Y]], ytd: ["R", R] },
  { target: "0", cells: [["0", G], ["1", R], ["2", R], ["NA", N]], ytd: ["3", R] },
  { target: "100", cells: [["25", G], ["NA", N], ["NA", N], ["NA", N]], ytd: ["25", G] },
  { target: "A", cells: [["A", G], ["B", Y], ["C", R], ["NA", N]], ytd: ["C", R] },
  { target: "100", cells: [["25", G], ["NA", N], ["NA", N], ["NA", N]], ytd: ["25", G] },
  { target: "G", cells: [["G", G], ["Y", Y], ["G", G], ["R", R]], ytd: ["R", R] },
  { target: "0", cells: [["0", G], ["NA", N], ["NA", N], ["NA", N]], ytd: ["0", R] },
  { target: "0", cells: [["G", G], ["Y", Y], ["R", R], ["NA", N]], ytd: ["R", R] },
  { target: "0", cells: [["G", G], ["R", R], ["Y", Y], ["NA", N]], ytd: ["R", R] },
  { target: "G", cells: [["Y", Y], ["R", R], ["G", G], ["NA", N]], ytd: ["R", R] },
  { target: "G", cells: [["G", G], ["R", R], ["R", R], ["Y", Y]], ytd: ["R", R] },
];

function ReportCard() {
  return (
    <section className={`${CARD} flex flex-col bg-black`}>
      <ActionBar compact />
      <div className="flex min-h-0 flex-1">
        <article className={`w-[195px] shrink-0 overflow-hidden bg-white ${LETTER}`}>
          <hr className="mt-[3px] mr-5 border-[#444]" />
          <p className="mt-[21px]">
            t: <b className="text-[5px] text-[#1a1aff]">May 2025</b>
          </p>
          <p className="mt-3.5">eview Report</p>
          <table className="mt-1 h-[157px] w-44 table-fixed border-collapse text-center leading-none">
            <colgroup>
              <col className="w-0.5" />
              <col className="w-[18px]" />
              <col className="w-[11px]" />
              <col className="w-3" />
              <col className="w-[13px]" />
              <col className="w-3" />
              <col className="w-[13px]" />
              <col className="w-3" />
              <col className="w-[9px]" />
              <col className="w-3" />
              <col className="w-3" />
              <col className="w-3" />
              <col className="w-[13px]" />
              <col className="w-3" />
              <col />
            </colgroup>
            <thead>
              <tr className="h-[9px] bg-[#efefef]">
                <th rowSpan={2} className={CELL} />
                <th rowSpan={2} className={CELL}>Target</th>
                <th colSpan={13} className={CELL}>2025 Results</th>
              </tr>
              <tr className="h-[9px] bg-[#efefef]">
                {[...YEAR, "YTD"].map((m) => (
                  <th key={m} className={CELL}>{m}</th>
                ))}
              </tr>
            </thead>
            <tbody>
              {RESULTS.map((r, i) => (
                <tr key={i}>
                  <td className={CELL} />
                  <td className={`${CELL} bg-[#d0d0d0]`}>{r.target}</td>
                  {YEAR.map((m, j) => (
                    <td key={m} className={`${CELL} ${r.cells[j]?.[1] ?? ""}`}>
                      {r.cells[j]?.[0] ?? ""}
                    </td>
                  ))}
                  <td className={`${CELL} ${r.ytd[1]}`}>{r.ytd[0]}</td>
                </tr>
              ))}
            </tbody>
          </table>
          <p className="mt-[3px]">
            d commitment to experience. Please review the report and let us know if you have any questions or
            <br />
            r feedback and insights are invaluable to us in our strive for mutual growth and Thank you for your
          </p>
        </article>
        <div className="flex w-[34px] shrink-0 flex-col items-end bg-[#333]">
          <div className="flex h-full w-1 flex-col items-center justify-between py-0.5 text-[4px] leading-none text-[#aaa]">
            <span>▲</span>
            <span className="mt-12 h-[50px] w-[3px] rounded-full bg-[#9a9a9a]" />
            <span>▼</span>
          </div>
        </div>
        <aside className="ml-1 flex min-w-0 flex-1 flex-col overflow-hidden pt-0.5 text-[5px] leading-[7px] whitespace-nowrap text-[#ddd]">
          <div className="h-7 shrink-0 bg-[#262626] pt-1 pl-1">
            <p className="font-bold">KPI</p>
            <div className="mt-1 flex items-center gap-1.5">
              <Paperclip className="size-[5px]" />
              <span className="flex h-2.5 w-8 items-center rounded-[2px] border border-[#444] pl-1">
                <span className="h-[5px] w-1 border-b-2 border-[#d33] bg-white" />
              </span>
            </div>
          </div>
          <div className="mt-1 h-24 shrink-0 rounded-[2px] bg-[#262626] pt-1 pl-1">
            <div className="flex gap-1">
              <span className="mt-0.5 flex size-[9px] items-center justify-center rounded-full bg-[#8a7000] text-[4px] text-[#222]">S</span>
              <p>
                SVD
                <br />
                To:
              </p>
            </div>
            <div className="mt-1 flex h-3.5 w-8 items-center gap-1 rounded-[2px] border border-[#3a3a3a] pl-1 text-[4px] leading-[5px]">
              <span className="h-[5px] w-1 border-b-2 border-[#d33] bg-white" />
              <p>
                2025
                <br />
                20 K
              </p>
            </div>
            <p className="mt-3.5">
              Hi,
              <br />
              FTA
            </p>
            <button type="button" className="mt-3.5 flex h-[9px] w-10 items-center gap-1 border border-[#444] pl-1">
              <Reply className="size-1.5 text-[#b06fc4]" /> Reply
            </button>
          </div>
        </aside>
      </div>
    </section>
  );
}

/* ----------------------------------------------------------------- Page */

export default function App() {
  return (
    <main className="min-h-screen bg-[#888] p-3.5">
      <div className="grid grid-cols-[256fr_521fr_256fr] gap-[9px]">
        <LoginCard />
        <div className="row-span-2 min-w-0">
          <InspectionUpdateCard />
        </div>
        <KpiCard />
        <ShipmentCard rows={STATUS_ROWS} />
        <FlowCard />
        <ShipmentCard rows={REJECTED_ROWS} drawer />
        <div className="row-span-2 min-w-0">
          <SupplierFormCard />
        </div>
        <LetterCard />
        <InspectionCard />
        <ReportCard />
      </div>
    </main>
  );
}
